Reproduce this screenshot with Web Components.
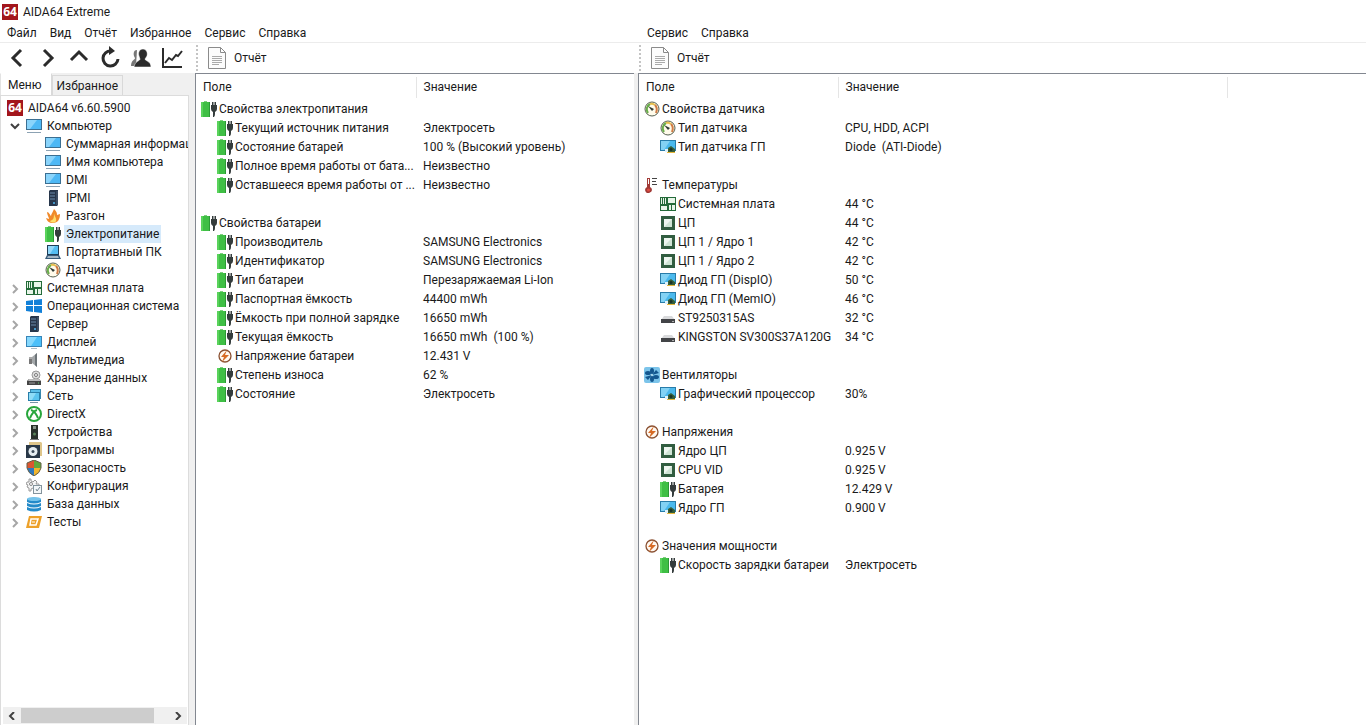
<!DOCTYPE html>
<html lang="ru">
<head>
<meta charset="utf-8">
<title>AIDA64 Extreme</title>
<style>
html, body { height: 100%; margin: 0; }
body { font: 12px/18px Roboto, "Open Sans", sans-serif; color: #1a1a1a; background: #fff; overflow: hidden; }
</style>
</head>
<body>
<aida-window></aida-window>

<template id="window-template">
  <style>
    :host { display: flex; flex-direction: column; height: 100%; background: #fff; }
    header { display: flex; align-items: center; gap: 5px; height: 24px; padding-left: 2px; }
    h1 { margin: 0; font-size: 12px; font-weight: 400; }
    main { flex: 1; min-height: 0; display: grid; grid-template-columns: 638fr 728fr; }
    section { display: flex; flex-direction: column; min-width: 0; min-height: 0; }
    .tools { display: flex; align-items: center; height: 31px; box-sizing: border-box; border-top: 1px solid #ececec; }
    .nav { display: flex; width: 195px; padding-left: 1px; box-sizing: border-box; }
    .body { flex: 1; display: flex; min-height: 0; background: #f0f0f0; }
    side-panel { width: 195px; flex: none; }
    data-list { flex: 1; min-width: 0; }
    .left data-list { margin-right: 4px; }
  </style>
  <header><app-icon name="logo"></app-icon><h1>AIDA64 Extreme</h1></header>
  <main>
    <section class="left">
      <menu-bar items="Файл,Вид,Отчёт,Избранное,Сервис,Справка"></menu-bar>
      <div class="tools">
        <div class="nav">
          <tool-button icon="back" label="Назад"></tool-button>
          <tool-button icon="forward" label="Вперёд"></tool-button>
          <tool-button icon="up" label="Вверх"></tool-button>
          <tool-button icon="refresh" label="Обновить"></tool-button>
          <tool-button icon="users" label="Пользователи"></tool-button>
          <tool-button icon="chart" label="График"></tool-button>
        </div>
        <report-tool>Отчёт</report-tool>
      </div>
      <div class="body">
        <side-panel></side-panel>
        <data-list source="power" field-width="220"></data-list>
      </div>
    </section>
    <section>
      <menu-bar items="Сервис,Справка" style="padding-left:2px"></menu-bar>
      <div class="tools"><report-tool>Отчёт</report-tool></div>
      <div class="body"><data-list source="sensors" field-width="199" value-width="389"></data-list></div>
    </section>
  </main>
</template>

<template id="side-template">
  <style>
    :host { display: flex; flex-direction: column; min-height: 0; }
    .tabs { display: flex; align-items: flex-end; height: 22px; }
    .tabs button { font: inherit; color: inherit; margin: 0; border: 1px solid #d9d9d9; border-bottom: 0; background: #f0f0f0; height: 20px; padding: 0 4px; line-height: 18px; }
    .tabs button[aria-selected=true] { background: #fff; height: 22px; padding: 0 9px 0 7px; border-color: #fff #d9d9d9 #fff #e3e3e3; }
    .frame { flex: 1; min-height: 0; display: flex; flex-direction: column; margin-right: 6px; border: 1px solid #dcdcdc; border-bottom: 0; background: #fff; overflow: hidden; }
    nav { flex: 1; padding-top: 3px; overflow: hidden; }
    ul { list-style: none; margin: 0; padding: 0; }
    li > a { display: flex; align-items: center; height: 18px; color: inherit; text-decoration: none; white-space: nowrap; }
    app-icon { margin-right: 3px; flex: none; }
    .root { padding-left: 6px; }
    .group { padding-left: 7px; }
    .group svg { width: 12px; height: 12px; margin-right: 6px; flex: none; fill: none; stroke: #a6a6a6; stroke-width: 2; }
    .group.open svg { stroke: #404040; }
    .leaf { padding-left: 44px; }
    span { padding: 0 2px; }
    .current span { background: #d6eafb; }
    .scroll { display: flex; align-items: center; height: 17px; background: #f0f0f0; margin: 0 1px 1px 2px; }
    .scroll button { border: 0; padding: 0; background: none; width: 18px; height: 17px; display: grid; place-items: center; }
    .scroll svg { width: 8px; height: 8px; fill: none; stroke: #404040; stroke-width: 2; }
    .track { flex: 1; height: 15px; }
    .thumb { width: 90%; height: 15px; background: #cdcdcd; }
  </style>
  <div class="tabs" role="tablist">
    <button role="tab" aria-selected="true">Меню</button><button role="tab" aria-selected="false">Избранное</button>
  </div>
  <div class="frame">
    <nav><ul></ul></nav>
    <div class="scroll">
      <button aria-label="Прокрутить влево"><svg viewBox="0 0 8 8"><path d="M6 0 2 4l4 4"/></svg></button>
      <div class="track"><div class="thumb"></div></div>
      <button aria-label="Прокрутить вправо"><svg viewBox="0 0 8 8"><path d="m2 0 4 4-4 4"/></svg></button>
    </div>
  </div>
</template>

<template id="list-template">
  <style>
    :host { display: block; background: #fff; border: 1px solid #828790; border-right: 0; border-bottom: 0; box-sizing: border-box; padding-top: 3px; overflow: hidden; }
    table { border-collapse: collapse; table-layout: fixed; width: 100%; }
    th { font-weight: 400; text-align: left; height: 19px; padding: 0 0 2px 7px; border-right: 1px solid #e5e5e5; line-height: 18px; }
    th:last-child { border-right: 0; }
    td { padding: 0; height: 19px; line-height: 18px; white-space: nowrap; }
    tbody::before { content: ""; display: table-row; height: 1px; }
    tbody td:nth-child(2) { padding-left: 7px; white-space: pre; }
    .field { display: flex; align-items: center; padding-left: 5px; }
    .child .field { padding-left: 21px; }
    .field span { margin-left: 2px; }
    app-icon { flex: none; }
  </style>
  <table>
    <colgroup><col><col><col></colgroup>
    <thead><tr><th scope="col">Поле</th><th scope="col">Значение</th></tr></thead>
    <tbody></tbody>
  </table>
</template>

<script>
const ICONS = {
  logo: '<rect width="16" height="16" fill="#a3161c"/><text x="8" y="12" text-anchor="middle" font-family="Open Sans,sans-serif" font-weight="700" font-size="12" fill="#fff">64</text>',
  pc: '<rect x=".5" y="1.500" width="15" height="10" fill="#4db8f5" stroke="#3b6f92"/><path d="M1 2h10L4 11H1z" fill="#8ad4fb"/><path d="M1 14.500h14" stroke="#8ca2b3"/>',
  display: '<rect x=".5" y="2.500" width="15" height="10" fill="#4cc0fa" stroke="#3785b8"/><path d="M1 3h10L5 12H1z" fill="#86d8fd"/><path d="M5 14.500h6" stroke="#a9bac5"/>',
  server: '<path d="m4 1 1-1h8v15l-1 1H4z" fill="#27364b"/><path d="M5 3h5M5 6h5M5 9h5" stroke="#6d8bac"/><path d="M12 1v14" stroke="#52647d"/><circle cx="9" cy="13" r="1" fill="#51b5ed"/>',
  fire: '<path d="M2 4c2 0 3 3 4 4C6 6 8 4 9 1c3 3 3 4 3 6l3-1c0 5-2 9-7 9-4 0-6-2-7-5l3 1C4 9 2 7 2 4z" fill="#f08a2b"/><path d="M9 5c0 3 3 5 2 8-1 2-5 2-6 0l2-1c2-1 2-4 2-7z" fill="#ffdf69"/>',
  battery: '<path d="M3 0h3v2H3z" fill="#7fcf80"/><rect x="0" y="1" width="9" height="15" fill="#3fbf45"/><path d="M0 1h2v15H0z" fill="#5ad35c"/><path d="M8.500 1v15" stroke="#2c9a36"/><path d="M11 1h1.500v3h1V1H15v3h1v4q0 2-2 3v2q0 2-1 3h-1V11q-2-1-2-3V4h1z" fill="#343c3c"/>',
  laptop: '<rect x="2.500" y="1.500" width="11" height="9" fill="#55bdf2" stroke="#1f3e58"/><path d="M3 2h7l-5 8H3z" fill="#93d8fa"/><path d="m2 11-2 4h16l-2-4z" fill="#385b79"/><path d="M3 12h10l1 2H2z" fill="#a5b7c6"/>',
  gauge: '<circle cx="8" cy="8" r="7" fill="#fffbea" stroke="#566050"/><path d="M4 12A6 6 0 0 1 6 3" fill="none" stroke="#68ae4a" stroke-width="2"/><path d="M6 3q3-1 5 1" fill="none" stroke="#e5bd4d" stroke-width="2"/><path d="M11 4q3 3 1 8" fill="none" stroke="#cf7b45" stroke-width="2"/><path d="m4 5 6 3-2 2z" fill="#303b36"/>',
  board: '<rect y="1" width="16" height="14" fill="#246b39"/><path d="M1 2h1v6H1zM3 2h1v6H3zM5 2h1v6H5zM8 2h7v5H8zM1 10h6v4H1zM9 9h2v5H9zM12 9h3v5h-3z" fill="#e8f5e9"/>',
  windows: '<path d="m0 3 7-1v5H0zM8 2l8-1v6H8zM0 8h7v6l-7-1zM8 8h8v7l-8-1z" fill="#1280d8"/>',
  speaker: '<path d="M3 5h3v7H3z" fill="#777"/><path d="m6 5 5-4v14l-5-4z" fill="#a4a8aa"/><path d="m9 3 2-2v14l-2-2z" fill="#6d7478"/><path d="M3 6h3" stroke="#ddd"/>',
  storage: '<circle cx="10" cy="5" r="4" fill="#ddd" stroke="#999"/><circle cx="10" cy="5" r="1.500" fill="#fff" stroke="#777"/><path d="M3 9h10l2 2v4H1v-4z" fill="#444"/><path d="m3 9-1 2h13l-2-2" fill="#bbb"/><path d="M3 13h6" stroke="#999"/><path d="M12 13h1" stroke="#60cc70"/>',
  network: '<rect x="4.500" y="1.500" width="10" height="9" fill="#58bee8" stroke="#3787ad"/><rect x="2.500" y="4.500" width="11" height="8" fill="#5ac4ef" stroke="#287ea9"/><path d="M3 5h7l-4 7H3z" fill="#8edcf7"/><path d="M4 14.500h8" stroke="#7694a5"/>',
  xbox: '<circle cx="8" cy="8" r="7" fill="#fff" stroke="#27a63b" stroke-width="2"/><path d="M5 4q4 1 7 8M11 4q-4 1-7 8" fill="none" stroke="#27a63b" stroke-width="2"/>',
  device: '<rect x="5" y="1" width="7" height="14" fill="#29312a"/><path d="M7 2h3v3H7z" fill="#8a958a"/><circle cx="8.500" cy="10" r="1.500" fill="#5a845a"/><path d="M4 15.500h9" stroke="#777"/>',
  programs: '<path d="M3 0h12l1 1v13H3z" fill="#dec58a"/><rect y="3" width="14" height="13" fill="#293847"/><circle cx="7" cy="9.500" r="4.500" fill="#e6edf1"/><circle cx="7" cy="9.500" r="1.500" fill="#3d4c5a"/>',
  shield: '<path d="M8 0 1 3v5h7z" fill="#dc5630"/><path d="m8 0 7 3v5H8z" fill="#62a83b"/><path d="M1 8h7v8Q2 13 1 8z" fill="#2f78bd"/><path d="M8 8h7q-1 5-7 8z" fill="#f2b52d"/><path d="m8 0 7 3v5q-1 5-7 8-6-3-7-8V3z" fill="none" stroke="#635f48"/>',
  config: '<path d="M3 1h2v2l2 1 2-2 2 2-1 2h3v2h-3l1 2-2 2-2-2-2 1v2H3v-3L1 9l1-2-2-1 1-2h2z" fill="#f5f5f5" stroke="#999"/><circle cx="5" cy="6" r="1.500" fill="#fff" stroke="#888"/><rect x="7.500" y="7.500" width="8" height="8" fill="#f2f6f8" stroke="#84949d"/><path d="m10 11 1 2 3-4" fill="none" stroke="#758791"/>',
  database: '<path d="M1 3v3q7 3 14 0V3q-7-3-14 0zM1 7v3q7 3 14 0V7q-7 3-14 0zM1 11v3q7 3 14 0v-3q-7 3-14 0z" fill="#238ac9"/><ellipse cx="8" cy="3" rx="7" ry="2" fill="#75c3eb"/>',
  tests: '<path d="M3 2h13l-3 12H0z" fill="#eda12a"/><path d="M5 5h7l-2 6H4z" fill="none" stroke="#fff" stroke-width="1.500"/><path d="M6 8h3" stroke="#fff"/>',
  bolt: '<circle cx="8" cy="8" r="6" fill="#fff8f0" stroke="#8a5031" stroke-width="1.300"/><path d="M10 2 4 9h3l-2 5 7-7H8z" fill="#d76b25"/>',
  gpu: '<rect x=".5" y="1.500" width="15" height="10" fill="#4bb9ed" stroke="#287ca9"/><path d="M1 2h9l-6 9H1z" fill="#83d2f4"/><path d="M5 10h5v3H5z" fill="#dff1fa"/><path d="m8 9 3-2 4 3v3H8z" fill="#365f3a"/><circle cx="11" cy="10.500" r="1.500" fill="#19332a"/><path d="M7 13.500h8" stroke="#e7b63b"/>',
  thermo: '<path d="M3 1h3v9q2 1 2 3t-3 3-4-3q0-2 2-3z" fill="#a23a36"/><path d="M4 2h1v5H4z" fill="#fff"/><circle cx="4.500" cy="13" r="1.500" fill="#e04c43"/><path d="M8 1.500h5M8 4.500h4M8 7.500h5" stroke="#444"/>',
  cpu: '<rect x="1" y="1" width="14" height="14" fill="#315d40"/><rect x="4" y="4" width="8" height="8" fill="#cfe4d5"/><path d="M4 4h8L4 12z" fill="#eef6f0"/>',
  drive: '<path d="m4 6-3 4h14l-3-4z" fill="#d9dadc"/><path d="M1 9h14v4H1z" fill="#424447"/><path d="M12 11.500h2" stroke="#aaa"/>',
  fan: '<rect width="16" height="16" rx="2" fill="#7cc4ea"/><g fill="#14578f"><ellipse cx="8" cy="4" rx="2" ry="3"/><ellipse cx="8" cy="12" rx="2" ry="3"/><ellipse cx="4" cy="6" rx="3" ry="2"/><ellipse cx="12" cy="10" rx="3" ry="2"/><path d="m8 8 4-5 3 3zM8 8l-4 5-3-3z"/></g><circle cx="8" cy="8" r="1" fill="#b8dff0"/>'
};
const TOOLS = {
  back: '<path d="m16 4-8 8 8 8" stroke-width="3"/>',
  forward: '<path d="m8 4 8 8-8 8" stroke-width="3"/>',
  up: '<path d="m4 14 8-8 8 8" stroke-width="3"/>',
  refresh: '<path d="M13 5a7.500 7.500 0 1 0 7 8" stroke-width="3"/><path d="M11 0v9l6-4z" fill="#2b2b2b" stroke="none"/>',
  users: '<path d="M8 4c-4 0-4 5-2 8 0 2-4 2-4 8h5z" fill="#777" stroke="none"/><path d="M14 3c-4 0-5 4-4 7l1 3c0 2-5 2-6 8h17c0-6-6-6-6-8l2-3c1-4-1-7-4-7z" fill="#2b2b2b" stroke="#fff" stroke-width=".5"/>',
  chart: '<path d="M3 2v19h19" stroke-width="2"/><path d="m5 17 4-5 3 2 4-5 2 1 4-5" stroke-width="2"/>'
};
const TREE = [
  ['root', 'logo', 'AIDA64 v6.60.5900'], ['group open', 'pc', 'Компьютер'],
  ['leaf', 'pc', 'Суммарная информация'], ['leaf', 'pc', 'Имя компьютера'], ['leaf', 'pc', 'DMI'],
  ['leaf', 'server', 'IPMI'], ['leaf', 'fire', 'Разгон'], ['leaf current', 'battery', 'Электропитание'],
  ['leaf', 'laptop', 'Портативный ПК'], ['leaf', 'gauge', 'Датчики'],
  ['group', 'board', 'Системная плата'], ['group', 'windows', 'Операционная система'],
  ['group', 'server', 'Сервер'], ['group', 'display', 'Дисплей'], ['group', 'speaker', 'Мультимедиа'],
  ['group', 'storage', 'Хранение данных'], ['group', 'network', 'Сеть'], ['group', 'xbox', 'DirectX'],
  ['group', 'device', 'Устройства'], ['group', 'programs', 'Программы'], ['group', 'shield', 'Безопасность'],
  ['group', 'config', 'Конфигурация'], ['group', 'database', 'База данных'], ['group', 'tests', 'Тесты']
];
const DATA = {
  power: [
    ['battery', 'Свойства электропитания'],
    ['battery', 'Текущий источник питания', 'Электросеть'],
    ['battery', 'Состояние батарей', '100 % (Высокий уровень)'],
    ['battery', 'Полное время работы от бата...', 'Неизвестно'],
    ['battery', 'Оставшееся время работы от ...', 'Неизвестно'],
    null,
    ['battery', 'Свойства батареи'],
    ['battery', 'Производитель', 'SAMSUNG Electronics'],
    ['battery', 'Идентификатор', 'SAMSUNG Electronics'],
    ['battery', 'Тип батареи', 'Перезаряжаемая Li-Ion'],
    ['battery', 'Паспортная ёмкость', '44400 mWh'],
    ['battery', 'Ёмкость при полной зарядке', '16650 mWh'],
    ['battery', 'Текущая ёмкость', '16650 mWh  (100 %)'],
    ['bolt', 'Напряжение батареи', '12.431 V'],
    ['battery', 'Степень износа', '62 %'],
    ['battery', 'Состояние', 'Электросеть']
  ],
  sensors: [
    ['gauge', 'Свойства датчика'],
    ['gauge', 'Тип датчика', 'CPU, HDD, ACPI'],
    ['gpu', 'Тип датчика ГП', 'Diode  (ATI-Diode)'],
    null,
    ['thermo', 'Температуры'],
    ['board', 'Системная плата', '44 °C'],
    ['cpu', 'ЦП', '44 °C'],
    ['cpu', 'ЦП 1 / Ядро 1', '42 °C'],
    ['cpu', 'ЦП 1 / Ядро 2', '42 °C'],
    ['gpu', 'Диод ГП (DispIO)', '50 °C'],
    ['gpu', 'Диод ГП (MemIO)', '46 °C'],
    ['drive', 'ST9250315AS', '32 °C'],
    ['drive', 'KINGSTON SV300S37A120G', '34 °C'],
    null,
    ['fan', 'Вентиляторы'],
    ['gpu', 'Графический процессор', '30%'],
    null,
    ['bolt', 'Напряжения'],
    ['cpu', 'Ядро ЦП', '0.925 V'],
    ['cpu', 'CPU VID', '0.925 V'],
    ['battery', 'Батарея', '12.429 V'],
    ['gpu', 'Ядро ГП', '0.900 V'],
    null,
    ['bolt', 'Значения мощности'],
    ['battery', 'Скорость зарядки батареи', 'Электросеть']
  ]
};

class Base extends HTMLElement {
  constructor() { super(); this.attachShadow({ mode: 'open' }); }
  use(id) { this.shadowRoot.append(document.getElementById(id).content.cloneNode(true)); }
}
customElements.define('app-icon', class extends Base {
  connectedCallback() {
    this.shadowRoot.innerHTML = `<style>:host{display:block;width:16px;height:16px}svg{display:block}</style>
      <svg width="16" height="16" viewBox="0 0 16 16" aria-hidden="true">${ICONS[this.getAttribute('name')]}</svg>`;
  }
});
customElements.define('menu-bar', class extends Base {
  connectedCallback() {
    this.shadowRoot.innerHTML = `<style>:host{display:flex;height:18px}
      button{font:inherit;color:inherit;border:0;background:none;margin:0;padding:0 6px 0 7px}</style>` +
      this.getAttribute('items').split(',').map(t => `<button>${t}</button>`).join('');
  }
});
customElements.define('tool-button', class extends Base {
  connectedCallback() {
    this.shadowRoot.innerHTML = `<style>:host{display:block}
      button{display:grid;place-items:center;width:31px;height:28px;border:0;padding:0;background:none}
      svg{fill:none;stroke:#2b2b2b}</style>
      <button aria-label="${this.getAttribute('label')}"><svg width="24" height="24" viewBox="0 0 24 24">${TOOLS[this.getAttribute('icon')]}</svg></button>`;
  }
});
customElements.define('report-tool', class extends Base {
  connectedCallback() {
    this.shadowRoot.innerHTML = `<style>:host{display:flex;align-items:center;padding-left:1px}
      i{height:26px;border-left:2px dotted #c4c4c4}
      button{display:flex;align-items:center;gap:8px;font:inherit;color:inherit;border:0;background:none;padding:0 9px 0 10px;height:28px}
      svg{fill:#fcfcfc;stroke:#8b8b8b}</style><i></i>
      <button><svg width="18" height="22" viewBox="0 0 18 22"><path d="M.5.5h12l5 5v16H.5zM12.500.500v5h5"/><path d="M4 9.500h10M4 11.500h10M4 13.500h10M4 15.500h10M4 17.500h7" stroke="#aaa"/></svg><slot></slot></button>`;
  }
});
customElements.define('side-panel', class extends Base {
  connectedCallback() {
    this.use('side-template');
    this.shadowRoot.querySelector('ul').innerHTML = TREE.map(([cls, icon, text]) => {
      const arrow = cls.startsWith('group')
        ? `<svg viewBox="0 0 12 12"><path d="${cls.includes('open') ? 'm3 4 4 4 4-4' : 'm5 3 4 4-4 4'}"/></svg>` : '';
      return `<li><a href="#" class="${cls}">${arrow}<app-icon name="${icon}"></app-icon><span>${text}</span></a></li>`;
    }).join('');
  }
});
customElements.define('data-list', class extends Base {
  connectedCallback() {
    this.use('list-template');
    const root = this.shadowRoot, cols = root.querySelectorAll('col');
    cols[0].style.width = this.getAttribute('field-width') + 'px';
    if (this.hasAttribute('value-width')) {
      cols[1].style.width = this.getAttribute('value-width') + 'px';
      root.querySelector('thead tr').append(document.createElement('th'));
    } else cols[2].remove();
    root.querySelector('tbody').innerHTML = DATA[this.getAttribute('source')].map(row => {
      if (!row) return '<tr><td></td><td></td></tr>';
      const [icon, name, value = ''] = row;
      return `<tr class="${value ? 'child' : ''}"><td><div class="field"><app-icon name="${icon}"></app-icon><span>${name}</span></div></td><td>${value}</td></tr>`;
    }).join('');
  }
});
customElements.define('aida-window', class extends Base {
  connectedCallback() { this.use('window-template'); }
});
</script>
</body>
</html>
